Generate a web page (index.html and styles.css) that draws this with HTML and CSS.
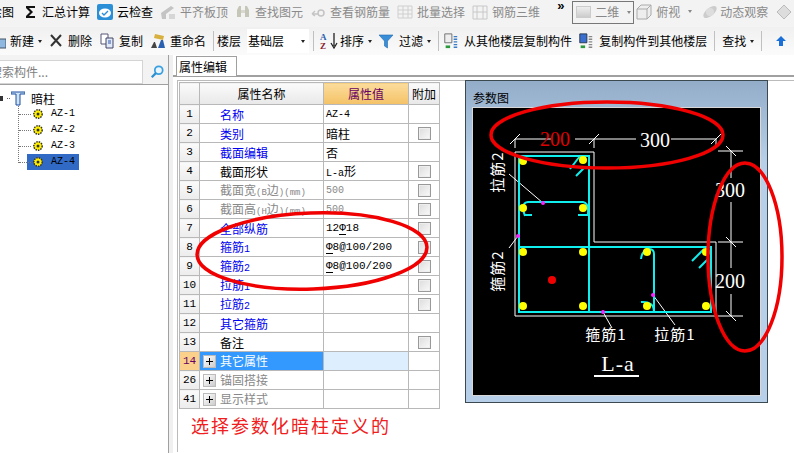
FILE: index.html
```html
<!DOCTYPE html>
<html lang="zh">
<head>
<meta charset="utf-8">
<title>属性编辑</title>
<link rel="stylesheet" href="styles.css">
</head>
<body>
<div class="app">
  <div class="bar bar-top">
    <div class="tool first-top"><span>绘图</span></div>
    <div class="tool"><svg class="ic" viewBox="0 0 16 16"><path d="M4 2h9v2H7l4 4-4 4h6v2H4v-2l4-4-4-4z" fill="#111"/></svg><span>汇总计算</span></div>
    <div class="tool"><svg class="ic" viewBox="0 0 16 16"><rect width="16" height="16" rx="2" fill="#2b8fd8"/><ellipse cx="8" cy="9" rx="6" ry="4.5" fill="#fff"/><path d="M5 9l2 2 4-4" fill="none" stroke="#2b8fd8" stroke-width="1.4"/></svg><span>云检查</span></div>
    <div class="tool off"><svg class="ic" viewBox="0 0 16 16"><path d="M1 9l10-7 3 2-8 6v5H2z" fill="#c4c4c4"/><rect x="9" y="10" width="6" height="5" fill="#d6d6d6"/></svg><span>平齐板顶</span></div>
    <div class="tool off"><svg class="ic" viewBox="0 0 16 16"><path d="M2 13V6l2-4h2v11zM10 13V2h2l2 4v7z" fill="#c6c6b8"/><rect x="6" y="6" width="4" height="3" fill="#d8d8d0"/></svg><span>查找图元</span></div>
    <div class="tool off"><svg class="ic" viewBox="0 0 16 16"><circle cx="11" cy="9" r="3" fill="none" stroke="#c4c4c4" stroke-width="1.5"/><path d="M2 10l3-3M2 10l3 2M3 10h5" stroke="#c4c4c4" stroke-width="1.4" fill="none"/></svg><span>查看钢筋量</span></div>
    <div class="tool off"><svg class="ic" viewBox="0 0 16 16"><path d="M1 2h14v12H1zM1 6h14M1 10h14M6 2v12M11 2v12" fill="none" stroke="#cfcfcf"/></svg><span>批量选择</span></div>
    <div class="tool off"><svg class="ic" viewBox="0 0 16 16"><path d="M1 2h14v13H1zM5 2v13M11 2v13M1 8h14" fill="none" stroke="#c8c8c8"/></svg><span>钢筋三维</span></div>
    <span class="more">»</span>
    <div class="view-select"><span class="view-box"></span><span>二维</span><i class="caret soft"></i></div>
    <div class="tool off tight-l"><svg class="ic" viewBox="0 0 16 16"><path d="M1 5l4-4h10v10l-4 4H1zM1 5h10v10M11 5l4-4" fill="#eee" stroke="#aaa"/></svg><span>俯视</span><i class="caret soft"></i></div>
    <div class="tool off orbit"><svg class="ic" viewBox="0 0 16 16"><ellipse cx="8" cy="8" rx="8" ry="4" transform="rotate(-40 8 8)" fill="#ccc"/><circle cx="8" cy="8" r="4" fill="#ddd"/></svg><span>动态观察</span></div>
    <div class="tool off orbit-next"><svg class="ic" viewBox="0 0 16 16"><path d="M1 8l7-7 7 7-7 7z" fill="#ddd" stroke="#bbb"/></svg></div>
  </div>

  <div class="bar bar-low">
    <div class="tool first-low"><svg class="ic" viewBox="0 0 16 16"><rect x="1" y="6" width="15" height="9" fill="#8fb8e0" stroke="#456"/></svg><span>新建</span><i class="caret"></i></div>
    <div class="tool"><svg class="ic" viewBox="0 0 16 16"><path d="M3 2l10 11M13 2L3 13" stroke="#333" stroke-width="2"/></svg><span>删除</span></div>
    <div class="tool"><svg class="ic" viewBox="0 0 16 16"><path d="M2 1h7v10H2z" fill="#fff" stroke="#557"/><path d="M7 5h7v10H7z" fill="#dfe9f7" stroke="#446"/><path d="M9 8h3M9 10h3" stroke="#35a"/></svg><span>复制</span></div>
    <div class="tool"><svg class="ic" viewBox="0 0 16 16"><path d="M5 1l9 2-1 4-9-2z" fill="#d8b040"/><path d="M1 15l3-6h1l2 6z" fill="#444"/><path d="M8 15l3-8h2l2 8z" fill="#2b5fb0"/></svg><span>重命名</span></div>
    <i class="sep"></i>
    <span class="floor-label">楼层</span>
    <div class="floor-select"><span>基础层</span><i class="caret"></i></div>
    <i class="sep sep-after-select"></i>
    <div class="tool sort"><svg class="ic wide" viewBox="0 0 20 18"><text x="1" y="8" class="sort-a">A</text><text x="1" y="17" class="sort-z">Z</text><path d="M15 1v13M12 11l3 5 3-5" fill="none" stroke="#222" stroke-width="1.3"/></svg><span>排序</span><i class="caret"></i></div>
    <div class="tool filter"><svg class="ic" viewBox="0 0 16 16"><path d="M1 2h14L9.500 8v7l-3-2V8z" fill="#3a8ed8" stroke="#1e6ab0" stroke-width=".6"/></svg><span>过滤</span><i class="caret"></i></div>
    <i class="sep"></i>
    <div class="tool copy-from"><svg class="ic" viewBox="0 0 16 18"><path d="M1 1h8v10H1z" fill="#eee" stroke="#666"/><path d="M2 14h5v3H2z" fill="#2c9a3c"/><path d="M11 4h4M11 7h4M11 10h4M11 13h4M11 16h4" stroke="#3a7cc8" stroke-width="1.500"/></svg><span>从其他楼层复制构件</span></div>
    <div class="tool copy-to"><svg class="ic" viewBox="0 0 16 18"><path d="M1 1h8v10H1z" fill="#3a6fd0" stroke="#234"/><path d="M2 14h5v3H2z" fill="#2c9a3c"/><path d="M11 4h4M11 7h4M11 10h4M11 13h4M11 16h4" stroke="#888" stroke-width="1.500"/></svg><span>复制构件到其他楼层</span></div>
    <i class="sep"></i>
    <div class="tool find"><span>查找</span><i class="caret"></i></div>
    <i class="sep"></i>
    <div class="tool up"><svg class="ic small" viewBox="0 0 12 12"><path d="M6 1l5 5H8v5H4V6H1z" fill="#1a70d8"/></svg><span>上</span></div>
  </div>

  <div class="work">
    <aside class="side">
      <div class="search">
        <div class="search-box">搜索构件...</div>
        <svg class="search-ic" viewBox="0 0 16 16"><circle cx="10" cy="6" r="4.500" fill="#eaf5ff" stroke="#3aa0e0" stroke-width="2"/><path d="M7 9l-5 5" stroke="#2d8fd0" stroke-width="2.500"/></svg>
      </div>
      <div class="tree">
        <div class="tree-root">
          <i class="root-mark"></i><i class="dots-h"></i>
          <svg class="t-ic" viewBox="0 0 14 15"><path d="M0 1h14v2H9v11H5V3H0z" fill="#cfe3f7" stroke="#1c4fa0"/></svg>
          <span>暗柱</span>
        </div>
        <ul class="tree-list">
          <li><svg class="gear" viewBox="0 0 12 12"><use href="#g"/></svg><span>AZ-1</span></li>
          <li><svg class="gear" viewBox="0 0 12 12"><use href="#g"/></svg><span>AZ-2</span></li>
          <li><svg class="gear" viewBox="0 0 12 12"><use href="#g"/></svg><span>AZ-3</span></li>
          <li class="sel"><svg class="gear" viewBox="0 0 12 12"><use href="#g"/></svg><span>AZ-4</span></li>
        </ul>
        <svg class="defs"><defs><g id="g"><circle cx="6" cy="6" r="4.200" fill="#fff000" stroke="#333" stroke-width="1.500" stroke-dasharray="1.500 1"/><circle cx="6" cy="6" r="1.500" fill="#333"/></g></defs></svg>
      </div>
    </aside>

    <main class="main">
      <div class="tabs"><div class="tab">属性编辑</div></div>
      <div class="content">
        <div class="table-col">
          <table class="props">
            <colgroup><col class="c-num"><col class="c-name"><col class="c-val"><col class="c-add"></colgroup>
            <thead><tr><th></th><th>属性名称</th><th class="val-head">属性值</th><th>附加</th></tr></thead>
            <tbody>
              <tr><td class="n">1</td><td class="name link">名称</td><td class="v mono">AZ-4</td><td></td></tr>
              <tr><td class="n">2</td><td class="name link">类别</td><td class="v">暗柱</td><td class="ck"><i></i></td></tr>
              <tr><td class="n">3</td><td class="name link">截面编辑</td><td class="v">否</td><td></td></tr>
              <tr><td class="n">4</td><td class="name">截面形状</td><td class="v"><span class="mono">L-a</span>形</td><td class="ck"><i></i></td></tr>
              <tr><td class="n">5</td><td class="name gray">截面宽<span class="mono tiny">(B</span>边<span class="mono tiny">)(mm)</span></td><td class="v mono gray">500</td><td class="ck"><i></i></td></tr>
              <tr><td class="n">6</td><td class="name gray">截面高<span class="mono tiny">(H</span>边<span class="mono tiny">)(mm)</span></td><td class="v mono gray">500</td><td class="ck"><i></i></td></tr>
              <tr><td class="n">7</td><td class="name link">全部纵筋</td><td class="v mono wide-m">12<u>Ф</u>18</td><td class="ck"><i></i></td></tr>
              <tr><td class="n">8</td><td class="name link">箍筋<span class="mono">1</span></td><td class="v mono wide-m"><u>Ф</u>8@100/200</td><td class="ck"><i></i></td></tr>
              <tr><td class="n">9</td><td class="name link">箍筋<span class="mono">2</span></td><td class="v mono wide-m"><u>Ф</u>8@100/200</td><td class="ck"><i></i></td></tr>
              <tr><td class="n">10</td><td class="name link">拉筋<span class="mono">1</span></td><td class="v"></td><td class="ck"><i></i></td></tr>
              <tr><td class="n">11</td><td class="name link">拉筋<span class="mono">2</span></td><td class="v"></td><td class="ck"><i></i></td></tr>
              <tr><td class="n">12</td><td class="name link">其它箍筋</td><td class="v"></td><td></td></tr>
              <tr><td class="n">13</td><td class="name">备注</td><td class="v"></td><td class="ck"><i></i></td></tr>
              <tr class="cur"><td class="n">14</td><td class="group"><b class="plus"></b>其它属性</td><td class="v"></td><td></td></tr>
              <tr><td class="n">26</td><td class="group gray"><b class="plus"></b>锚固搭接</td><td class="v"></td><td></td></tr>
              <tr><td class="n">41</td><td class="group gray"><b class="plus"></b>显示样式</td><td class="v"></td><td></td></tr>
            </tbody>
          </table>
          <p class="note">选择参数化暗柱定义的</p>
        </div>
        <section class="panel">
          <h2 class="panel-title">参数图</h2>
          <svg class="figure" viewBox="473 108 287 287">
            <g class="thin">
              <path d="M515 152H594V242H716V316H515Z"/>
              <path d="M515 139H551M575 139H636M671 139H716M510 144L520 134M589 144L599 134M711 144L721 134M515 139v9M594 139v9M716 139v9"/>
              <path d="M718 151H743M718 242H743M718 316H743M731 151V178M731 202V268M731 294V316M726 146L736 156M726 237L736 247M726 311L736 321"/>
              <path d="M509 174L543 203M509 248L518 236M603 312L612 328M653 295L675 325"/>
            </g>
            <g class="cyan">
              <path d="M519 156H589V312M519 156V312H711V247H519"/>
              <path d="M654 312V254Q654 249 649 249Q642 250 641 259M654 312Q654 301 641 302M525 216Q520 203 528 202H583Q589 203 588 214M525 215H532M578 215H588"/>
              <path d="M570 169L580 156M576 176L585 167M692 261L704 249M699 268L708 259"/>
            </g>
            <g class="rebar-dots">
              <circle cx="523" cy="161" r="4"/><circle cx="583" cy="160" r="4"/><circle cx="523" cy="208" r="4"/><circle cx="583" cy="208" r="4"/>
              <circle cx="523" cy="252" r="4"/><circle cx="583" cy="252" r="4"/><circle cx="647" cy="252" r="4"/><circle cx="706" cy="252" r="4"/>
              <circle cx="523" cy="306" r="4"/><circle cx="583" cy="306" r="4"/><circle cx="647" cy="306" r="4"/><circle cx="706" cy="306" r="4"/>
            </g>
            <circle class="red-dot" cx="552" cy="280" r="4"/>
            <g class="pins"><circle cx="543" cy="203" r="2"/><circle cx="518" cy="236" r="2"/><circle cx="603" cy="312" r="2"/><circle cx="653" cy="295" r="2"/></g>
            <text class="dim dim-red" x="555" y="146">200</text>
            <text class="dim" x="655" y="147">300</text>
            <text class="dim" x="730" y="197">300</text>
            <text class="dim" x="730" y="288">200</text>
            <text class="lab" transform="translate(503 172) rotate(-90)">拉筋2</text>
            <text class="lab" transform="translate(503 271) rotate(-90)">箍筋2</text>
            <text class="lab" x="606" y="340">箍筋1</text>
            <text class="lab" x="675" y="340">拉筋1</text>
            <text class="title" x="618" y="371">L-a</text>
            <path class="under" d="M594 376H639"/>
          </svg>
        </section>
      </div>
    </main>
  </div>

  <svg class="marks" viewBox="0 0 794 453">
    <ellipse cx="607" cy="135" rx="116" ry="33"/>
    <ellipse cx="745" cy="257" rx="37" ry="94"/>
    <ellipse cx="312" cy="251" rx="115" ry="38" transform="rotate(-2 312 251)"/>
  </svg>
</div>
</body>
</html>
```

FILE: styles.css
```css
* { box-sizing: border-box; }
html, body { margin: 0; padding: 0; }
body { font-family: "Noto Sans CJK SC", "Liberation Sans", sans-serif; font-size: 12px; color: #000; background: #fff; }
.app { position: relative; width: 794px; height: 453px; overflow: hidden; background: #f0f0f0; }

.bar { display: flex; align-items: center; gap: 7px; white-space: nowrap; overflow: hidden; width: 794px; line-height: 16px; }
.bar > * { flex: none; }
.bar-top { height: 27px; background: #f3f3f3; padding-bottom: 4px; }
.bar-low { height: 28px; background: linear-gradient(#f0f0f0, #fbfbfb); }
.tool { display: flex; align-items: center; gap: 4px; }
.ic { width: 16px; height: 16px; flex: none; }
.ic.wide { width: 20px; height: 18px; }
.ic.small { width: 12px; height: 12px; }
.off { color: #8a8a8a; }
.first-top { margin-left: -10px; margin-right: 1px; }
.first-low { margin-left: -10px; margin-right: -1px; }
.more { margin-left: 10px; width: 8px; font: bold 13px/12px "Liberation Sans", sans-serif; align-self: flex-start; }
.view-select { display: flex; align-items: center; width: 62px; height: 23px; padding-left: 3px; border: 1px solid #777; color: #888; background: #f3f3f3; margin-top: 1px; gap: 4px; }
.view-box { width: 15px; height: 12px; background: linear-gradient(#eee, #ccc); border: 1px solid #ccc; }
.caret { display: inline-block; width: 0; height: 0; border: 2.5px solid transparent; border-top: 3px solid #222; border-bottom: 0; }
.caret.soft { border-top-color: #888; margin-left: 4px; }
.tight-l { margin-left: -5px; }
.orbit { margin-left: 3px; gap: 2px; }
.orbit-next { margin-left: 1px; }

.sep { width: 1px; height: 20px; background: #c0c0c0; }
.floor-label { margin-left: -4px; }
.floor-select { display: flex; align-items: center; justify-content: space-between; width: 62px; height: 24px; margin-left: -1px; padding: 0 4px 0 1px; background: #fff; }
.sep-after-select { margin-left: -3px; }
.sort { margin-left: -2px; gap: 1px; }
.sort .caret { margin-left: 3px; }
.sort-a, .sort-z { font: bold 9px "Liberation Serif", serif; }
.sort-a { fill: #2b5fb0; }
.sort-z { fill: #8a2030; }
.filter { margin-left: -1px; gap: 5px; }
.filter .caret { margin-left: -1px; }
.copy-from { gap: 5px; margin-left: -3px; }
.copy-to { gap: 5px; margin-left: -1px; }
.find { margin-left: 0; }
.up { margin-left: 6px; gap: 7px; }

.work { display: flex; height: 398px; }
.side { width: 169px; flex: none; background: #fff; border-right: 1px solid #a0a0a0; }
.search { display: flex; align-items: center; gap: 7px; height: 30px; padding-top: 4px; border-bottom: 1px solid #a0a0a0; background: #f3f3f3; }
.search-box { width: 143px; height: 24px; line-height: 22px; text-indent: -10px; color: #808080; background: #fff; border: 1px solid #d4d4d4; border-left: 0; overflow: hidden; white-space: nowrap; }
.search-ic { width: 14px; height: 14px; }
.tree { position: relative; background: #fff; }
.tree-root { display: flex; align-items: center; height: 18px; margin-top: 3px; padding-top: 3px; }
.root-mark { width: 3px; height: 5px; background: #333; }
.dots-h { width: 3px; margin-left: 4px; border-top: 1px dotted #666; }
.t-ic { width: 14px; height: 15px; margin-left: 1px; }
.tree-root span { margin-left: 6px; font-size: 12px; }
.tree-list { list-style: none; margin: 0 0 0 18px; padding: 0; border-left: 1px dotted #777; height: 57px; }
.tree-list li { position: relative; display: flex; align-items: center; gap: 7px; height: 16px; width: 60px; padding-left: 13px; font: 10px/16px "Liberation Mono", monospace; }
.tree-list li::before { content: ""; position: absolute; left: 0; top: 8px; width: 12px; border-top: 1px dotted #777; }
.tree-list li.sel { background: linear-gradient(90deg, transparent 8px, #316ac5 8px); }
.gear { width: 12px; height: 12px; }
.defs { position: absolute; width: 0; height: 0; }

.main { flex: 1; min-width: 0; margin-left: 4px; background: #fff; }
.tabs { height: 22px; padding: 1px 0 0 3px; background: #fff; border-bottom: 2px solid #a0a0a0; }
.tab { width: 61px; height: 20px; line-height: 19px; padding-left: 2px; background: #fff; border: 1px solid #a0a0a0; border-bottom: 0; }
.content { display: flex; margin-top: 3px; margin-left: 4px; border-top: 1px solid #bbb; border-left: 1px solid #bbb; height: 372px; padding-left: 1px; }
.table-col { flex: none; width: 260px; padding-top: 1px; }

.props { border-collapse: collapse; table-layout: fixed; width: 260px; }
.c-num { width: 20px; }
.c-name { width: 124px; }
.c-val { width: 85px; }
.c-add { width: 31px; }
.props td, .props th { padding: 0; border: 1px solid #b8b8b8; font-weight: 400; overflow: hidden; white-space: nowrap; }
.props td { height: 19px; line-height: 13px; vertical-align: middle; }
.props td span { line-height: 1; }
.props th { height: 22px; line-height: 16px; background: linear-gradient(#fbfbfb, #e8e8e8); }
.props th.val-head { color: #660066; background: linear-gradient(#fbdc9c, #f4c266); }
.n { text-align: center; background: linear-gradient(#fafafa, #ececec); font-family: "Liberation Mono", monospace; font-size: 11px; }
.name { padding-left: 20px !important; }
.group { padding-left: 3px !important; }
.link { color: #0000f0; }
.v { padding-left: 2px !important; }
.mono { font-family: "Liberation Mono", monospace; font-size: 10px; }
.tiny { font-size: 9px; }
.wide-m { font-size: 11px; }
.wide-m u { text-decoration: none; border-bottom: 1px solid #000; }
.props .gray, .props .gray span { color: #888; }
.ck { text-align: center; }
.ck i { display: block; width: 13px; height: 13px; margin: 0 auto; border: 1px solid #999; background: linear-gradient(135deg, #dcdcdc, #fafafa); box-shadow: inset 0 0 0 1px #eee; }
.plus { display: inline-block; position: relative; width: 13px; height: 13px; margin-right: 4px; vertical-align: -2px; background: linear-gradient(135deg, #fff, #ccc); border: 1px solid #bbb; }
.plus::before { content: ""; position: absolute; left: 2px; right: 2px; top: 5px; height: 1px; background: #000; }
.plus::after { content: ""; position: absolute; top: 2px; bottom: 2px; left: 5px; width: 1px; background: #000; }
.cur .n { background: #fbd08a; color: #660066; }
.cur .group { background: #3399ff; color: #fff; }
.cur .v { background: #ddeeff; }
.note { margin: 4px 0 0 12px; font-size: 18px; line-height: 24px; letter-spacing: 2px; color: #f02020; }

.panel { flex: none; width: 303px; height: 323px; margin: -1px 0 0 26px; padding: 0 7px; border: 1px solid #3a4a50; background: linear-gradient(#93adc9, #b7cfe8 25%); }
.panel-title { margin: 0; height: 27px; padding-top: 9px; font-size: 12px; line-height: 16px; font-weight: 400; }
.figure { display: block; width: 287px; height: 287px; background: #000; outline: 1px solid #d8d8d8; }
.thin path { fill: none; stroke: #fff; stroke-width: 1; }
.cyan path { fill: none; stroke: #1ee; stroke-width: 2; }
.rebar-dots circle { fill: #ffff00; }
.red-dot { fill: #f00000; }
.pins circle { fill: #ff20ff; }
.dim { font: 20px "Liberation Serif", serif; fill: #fff; text-anchor: middle; }
.dim-red { fill: #e00000; }
.lab { font: 15px "Noto Sans CJK SC", sans-serif; fill: #fff; text-anchor: middle; letter-spacing: 1px; }
.title { font: 22px "Liberation Serif", serif; fill: #fff; text-anchor: middle; letter-spacing: 1px; }
.under { stroke: #fff; stroke-width: 2; }

.marks { position: absolute; left: 0; top: 0; width: 794px; height: 453px; pointer-events: none; }
.marks ellipse { fill: none; stroke: #f00000; stroke-width: 3.5; }
```
